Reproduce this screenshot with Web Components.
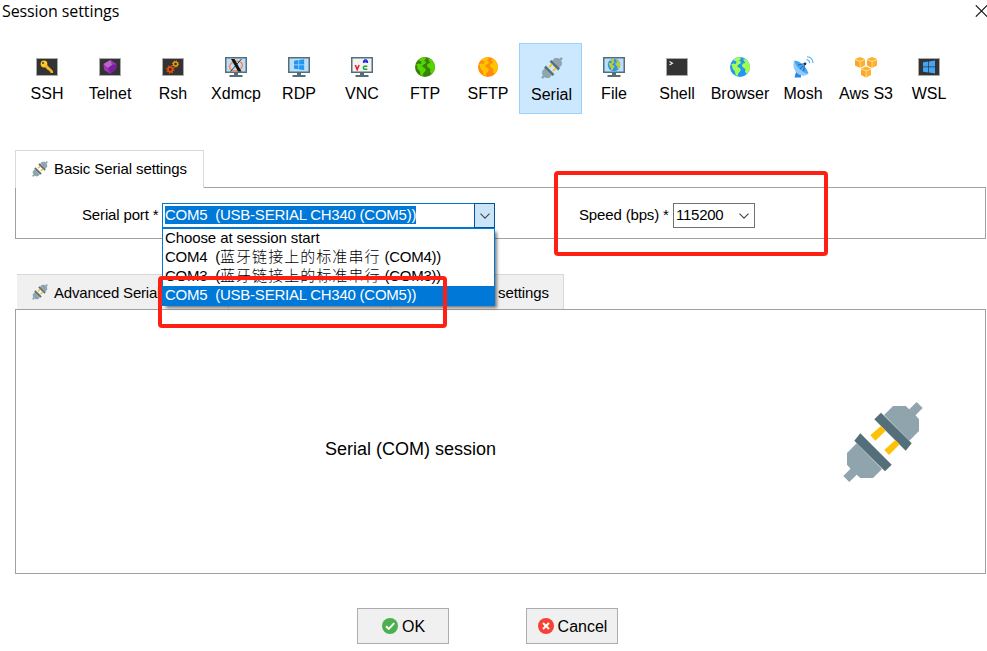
<!DOCTYPE html>
<html lang="en">
<head>
<meta charset="utf-8">
<title>Session settings</title>
<style>
html,body{margin:0;background:#fff;overflow:hidden}
</style>
</head>
<body>
<session-dialog></session-dialog>
<script>
const plugHalf = '<path fill="#90a4ae" d="M50 4H62.7L66.3 7.3L73.7 0L79.7 6L72.5 13.3L76 17.3V29L66.3 38.7L41 13Z"/><path fill="#546e7a" d="M38 10.7L68.7 41.3L62.7 48.7L31.3 17.3Z"/>';
const plug = '<g>' + plugHalf + '<path fill="#ffc107" d="M38 24L42.7 28.7L32.3 38.7L27.3 33.3ZM52.3 38L56.7 42.3L46 53L41.3 48Z"/><g transform="rotate(180 40 40)">' + plugHalf + '</g></g>';
const box = '<path fill="#333" stroke="#aaa" d="M.5 2.5h21v17H.5z"/>';
const monitor = '<path fill="#546e7a" d="M0 1h22v16H0zM9 17h4v2h4.500v2h-13v-2H9z"/><path fill="#bbdefb" d="M1.500 2.500h19v13h-19z"/>';
const globe = (sea, land, s = 1) => `<g transform="translate(${11 - 11 * s} ${11 - 11 * s}) scale(${s})"><circle cx="11" cy="11" r="10" fill="${sea}"/><path fill="${land}" d="M4.200 4.200Q7 1.200 10.500 1L12 2.500L10 5L12 5.500L11.500 7.500L9.500 8.500L8 10.500L10 11.500L12 13.500L11 15.500L9.500 17L8.500 20L6.500 19L6 15.500L3.500 12.500L3 9.500L2 8.500L4.500 7.500L7 8L7.500 5.500ZM14 2.500L18 4L20.500 8L21 12L19.500 16L17.500 18L16 15.500L16.500 13L14 11.500L12.800 9.500L14 7.500L16.500 7L15 5Z"/></g>`;
const windowsLogo = c => `<path fill="${c}" d="M5 6.200L10.300 5.500V10.600H5zM11 5.400L17 4.500V10.600H11zM5 11.300H10.300V16.500L5 15.800zM11 11.300H17V17.500L11 16.600z"/>`;
const cube = (x, y) => `<g transform="translate(${x} ${y})"><path fill="#ffb02e" d="M0 2L5 0L10 2V8.500L5 11L0 8.500Z"/><path fill="none" stroke="#fff0d0" stroke-width=".7" d="M0 2.500L5 4.500L10 2.500M5 4.500V11"/><path fill="#f29a1a" d="M.4 3.200L4.500 5V10.300L.4 8.300Z" opacity=".4"/></g>`;
const ICONS = {
  ssh: [22, box + '<circle cx="8" cy="8" r="3.400" fill="#ffc928"/><circle cx="7" cy="7" r=".9" fill="#333"/><path fill="#f9b91e" d="M8.700 10.800L10.800 8.700L17 15V17H14.500V15.600H13.300V14.300H12Z"/>'],
  telnet: [22, box + '<path fill="#9c35b5" d="M4.500 8L11.500 4L17.500 8L17 13L11.500 18L5 14Z"/><path fill="#ba68c8" d="M4.500 8L11.500 4L13 9L9 12Z"/><path fill="#7b1fa2" d="M13 9L17.500 8L17 13L11.500 18L9 12Z"/>'],
  rsh: [22, box + '<g fill="none"><circle cx="8.300" cy="13.500" r="2.300" stroke="#e65100" stroke-width="1.700"/><circle cx="8.300" cy="13.500" r="3.600" stroke="#e65100" stroke-width="1.200" stroke-dasharray="1.410 1.410"/><circle cx="13.500" cy="8" r="2" stroke="#f99b12" stroke-width="1.300"/><circle cx="13.500" cy="8" r="3.100" stroke="#f99b12" stroke-width="1" stroke-dasharray="1.220 1.220"/></g>'],
  xdmcp: [22, monitor + '<ellipse cx="11" cy="10" rx="6.500" ry="4.700" fill="none" stroke="#ff8a50" stroke-width="1.500" transform="rotate(-15 11 10)"/><path fill="#111" d="M6 3H9.500L16.500 15.500H13Z"/><path stroke="#111" stroke-width=".8" d="M16.500 3L5.500 15.500"/>'],
  rdp: [22, monitor + '<g transform="translate(1.200 -.2) scale(.88)"><path fill="#2196f3" d="M5.500 5.500L10.500 4.800V9.800H5.500zM11.300 4.700L17 4V9.800H11.300zM5.500 10.600H10.500V15.300L5.500 14.700zM11.300 10.600H17V16.200L11.300 15.500z"/></g>'],
  vnc: [22, '<path fill="#546e7a" d="M0 1h22v16H0zM9 17h4v2h4.500v2h-13v-2H9z"/><path fill="#f3f3f3" d="M1.500 2.500h19v13h-19z"/><path fill="none" stroke="#e5222a" stroke-width="1.600" d="M4.300 9L6.200 13.500L8.100 9"/><path fill="none" stroke="#2525e5" stroke-width="1.500" d="M12.700 7V5.200L13.800 4H15.200L16.300 5.200V7M12.700 5.800H16.300"/><path fill="none" stroke="#23a323" stroke-width="1.500" d="M16.300 10.200H13.300L12.500 11V12.500L13.300 13.300H16.300"/>'],
  ftp: [22, globe('#38800c', '#56d500')],
  sftp: [22, globe('#ff8a0c', '#ffc400')],
  serial: [80, plug],
  file: [22, monitor + '<g transform="translate(0 -2)">' + globe('#2196f3', '#c5c936', .62) + '</g>'],
  shell: [22, box + '<path fill="none" stroke="#eee" stroke-width="1.100" d="M3.500 5.500L6.500 7.200L3.500 9"/>'],
  browser: [22, globe('#2196f3', '#a2ff50')],
  mosh: [22, '<path fill="#1e88e5" d="M4 16L7 16L9 19V21.500H2.500Z"/><path fill="#90caf9" d="M2.500 4.500C0 9 2 15 6 18C10 20.500 14 20 16.500 17.500Z"/><path fill="#42a5f5" d="M2.500 4.500Q8 5 11.500 9.500Q15.500 13 16.500 17.500Q12 17.500 7.500 13Q3 8.500 2.500 4.500Z"/><path fill="none" stroke="#24558a" stroke-width=".8" d="M6 9L13 7.500L11.500 15M8 13L13 7.500"/><circle cx="13" cy="7.800" r="1.400" fill="#1a2f6b"/><path fill="none" stroke="#55b2f2" stroke-width="1.100" d="M14.500 3.500Q17.500 4 17.800 7.300M15 .7Q20.500 1 21 7"/>'],
  aws: [22, cube(0, 1) + cube(12, 1) + cube(6, 10.500)],
  wsl: [22, box + windowsLogo('#42a5f5')],
  ok: [16, '<circle cx="8" cy="8" r="8" fill="#4caf50"/><path fill="none" stroke="#fff" stroke-width="1.900" d="M4 8.200L6.800 10.900L12.200 5.200"/>'],
  cancel: [16, '<circle cx="8" cy="8" r="8" fill="#f44336"/><path stroke="#fff" stroke-width="2" d="M5 5L11 11M11 5L5 11"/>'],
  close: [12, '<path stroke="#111" stroke-width="1.100" d="M.8 .3L12.200 11.700M12.200 .3L.8 11.700"/>'],
  chevron: [10, '<path fill="none" stroke="#444" stroke-width="1.100" d="M.5 2.700L5 7.200L9.500 2.700"/>']
};

const define = (name, render) => customElements.define(name, class extends HTMLElement {
  connectedCallback() {
    if (this.shadowRoot) return;
    this.attachShadow({ mode: 'open' }).innerHTML = render(this);
  }
});

define('app-icon', el => {
  const [size, art] = ICONS[el.getAttribute('name')];
  return `<style>:host{display:block;flex:none;width:22px;height:22px}svg{display:block;width:100%;height:100%}</style><svg viewBox="0 0 ${size} ${size}">${art}</svg>`;
});

define('title-bar', () => `<style>
:host{display:flex;justify-content:space-between;height:24px;padding:0 0 0 2px;box-sizing:border-box;font:16px/22px "Open Sans","Noto Sans",sans-serif;letter-spacing:-.1px}
app-icon{width:12px;height:12px;margin-top:5px}
.x{width:12px;overflow:hidden}</style><slot></slot><span class="x"><app-icon name="close"></app-icon></span>`);

define('protocol-bar', () => `<style>:host{display:flex;margin:19px 0 0 15px;height:71px}</style><slot></slot>`);

define('protocol-item', el => `<style>
:host{display:flex;flex-direction:column;align-items:center;width:63px;height:71px;box-sizing:border-box;padding-top:13px;flex:none;font-size:16px;line-height:20px}
:host([selected]){background:#cce8ff;border:1px solid #99d1ff;padding:13px 0 0 2px}
.label{margin-top:6px;padding-left:1px;white-space:nowrap}
:host([selected]) .label{padding-left:0}</style><app-icon name="${el.getAttribute('icon')}"></app-icon><span class="label"><slot></slot></span>`);

define('tab-group', () => `<style>
:host{display:block;margin:0 1px 0 15px}
.tabs{display:flex}
.panel{border:1px solid #a0a0a0;box-sizing:border-box;height:var(--panel-height);display:flex}
</style><div class="tabs"><slot name="tab"></slot></div><div class="panel"><slot></slot></div>`);

define('tab-label', el => `<style>
:host{display:flex;align-items:center;box-sizing:border-box;font-size:15px;letter-spacing:-.1px;white-space:pre}
:host([active]){height:38px;width:189px;margin-bottom:-1px;background:#fff;border:solid #d9d9d9;border-width:1px 1px 0;padding:0 0 2px 16px;position:relative}
:host(:not([active])){height:35px;background:#f0f0f0;border:solid #d9d9d9;border-width:1px 1px 0 0;padding-left:15px}
app-icon{width:16px;height:16px;margin-right:6px}</style>${el.hasAttribute('icon') ? `<app-icon name="${el.getAttribute('icon')}"></app-icon>` : ''}<slot></slot>`);

define('combo-box', () => `<style>
:host{display:flex;position:relative;box-sizing:border-box;height:25px;border:1px solid #707070;background:#fff;font-size:15px;line-height:18px;white-space:pre}
:host([open]){border-color:#0078d7}
.value{margin:2px 0 0 2px;height:18px}
:host([open]) .value{background:#0078d7;color:#fff}
.arrow{margin-left:auto;width:20px;display:flex;align-items:center;justify-content:center}
:host([open]) .arrow{background:#cce4f7;box-shadow:0 0 0 1px #005499;width:19px}
app-icon{width:10px;height:10px}
::slotted(option-list){position:absolute;left:-1px;top:24px;z-index:2}
</style><span class="value"><slot></slot></span><span class="arrow"><app-icon name="chevron"></app-icon></span><slot name="list"></slot>`);

define('option-list', () => `<style>:host{display:block;box-sizing:border-box;width:333px;height:78px;background:#fff;border:1px solid #0078d7;box-shadow:3px 3px 3px -1px rgba(0,0,0,.5)}</style><slot></slot>`);

define('list-option', () => `<style>:host{display:block;height:19px;line-height:17px;padding-left:2px;overflow:hidden;white-space:pre}
:host([selected]){background:#0078d7;color:#fff}</style><slot></slot>`);

define('push-button', el => `<style>:host{display:flex;align-items:center;justify-content:center;box-sizing:border-box;width:92px;height:36px;background:#f0f0f0;border:1px solid #adadad;font-size:16px;padding-left:1px}
app-icon{width:16px;height:16px;margin-right:4px}span{padding-top:1px}</style><app-icon name="${el.getAttribute('icon')}"></app-icon><span><slot></slot></span>`);

define('highlight-frame', () => `<style>:host{display:block;position:absolute;z-index:5;box-sizing:border-box;border:4px solid #ff1f13;border-radius:4px;pointer-events:none}</style>`);

const protocols = [['ssh','SSH'],['telnet','Telnet'],['rsh','Rsh'],['xdmcp','Xdmcp'],['rdp','RDP'],['vnc','VNC'],['ftp','FTP'],['sftp','SFTP'],['serial','Serial'],['file','File'],['shell','Shell'],['browser','Browser'],['mosh','Mosh'],['aws','Aws S3'],['wsl','WSL']];

define('session-dialog', () => `<style>
:host{display:block;position:relative;width:987px;height:651px;overflow:hidden;background:#fff;color:#000;font-family:"Liberation Sans","Noto Sans CJK SC",sans-serif}
.basic{margin-top:36px;--panel-height:52px}
.advanced{margin-top:35px;--panel-height:265px}
.field{display:flex;align-items:flex-start;margin-top:15px;font-size:15px;line-height:23px;white-space:pre;letter-spacing:-.15px}
.port{margin-left:66px}.speed{margin-left:84px}
.port .name{width:80px}.speed .name{width:94px}
.port combo-box{width:333px;letter-spacing:-.24px}
.speed combo-box{width:82px;letter-spacing:-.25px}
.cjk{letter-spacing:1.05px;font-weight:300}
.first{width:212px;margin-left:2px;letter-spacing:-.2px}.second{width:162px}.third{width:173px;justify-content:flex-end;padding-right:14px!important}
.heading{font-size:18px;margin:128px 0 0 309px;line-height:22px;width:518px}
.big{width:80px;height:80px;margin-top:92px}
footer{display:flex;gap:77px;margin:34px 0 0 357px}
.a{left:554px;top:171px;width:274px;height:85px}
.b{left:158px;top:276px;width:289px;height:52px}
</style>
<title-bar>Session settings</title-bar>
<protocol-bar>${protocols.map(([i, t]) => `<protocol-item icon="${i}"${i === 'serial' ? ' selected' : ''}>${t}</protocol-item>`).join('')}</protocol-bar>
<tab-group class="basic"><tab-label slot="tab" active icon="serial">Basic Serial settings</tab-label>
<div class="field port"><span class="name">Serial port *</span><combo-box open>COM5  (USB-SERIAL CH340 (COM5))<option-list slot="list"><list-option style="letter-spacing:-.1px">Choose at session start</list-option><list-option>COM4  (<span class="cjk">蓝牙链接上的标准串行</span> (COM4))</list-option><list-option>COM3  (<span class="cjk">蓝牙链接上的标准串行</span> (COM3))</list-option><list-option selected>COM5  (USB-SERIAL CH340 (COM5))</list-option></option-list></combo-box></div>
<div class="field speed"><span class="name">Speed (bps) *</span><combo-box>115200</combo-box></div>
</tab-group>
<tab-group class="advanced"><tab-label slot="tab" class="first" icon="serial">Advanced Serial</tab-label><tab-label slot="tab" class="second"></tab-label><tab-label slot="tab" class="third">settings</tab-label>
<div class="heading">Serial (COM) session</div><app-icon class="big" name="serial"></app-icon>
</tab-group>
<footer><push-button icon="ok">OK</push-button><push-button icon="cancel">Cancel</push-button></footer>
<highlight-frame class="a"></highlight-frame><highlight-frame class="b"></highlight-frame>`);
</script>
</body>
</html>
